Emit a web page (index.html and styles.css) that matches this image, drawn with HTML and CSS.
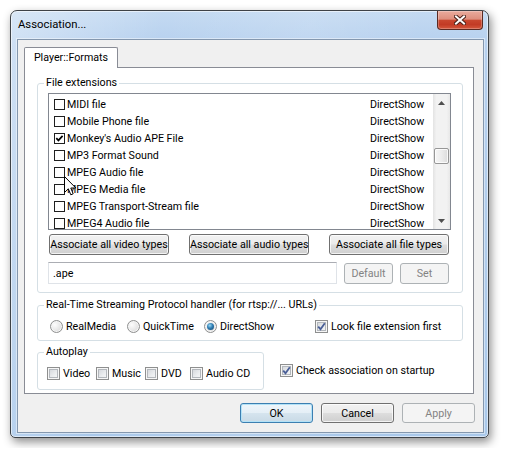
FILE: index.html
```html
<!DOCTYPE html>
<html lang="en">
<head>
<meta charset="utf-8">
<title>Association...</title>
<link rel="stylesheet" href="styles.css">
</head>
<body>
<div class="desktop">
  <div class="window">
    <div class="titlebar">
      <span class="title">Association...</span>
      <button class="close" aria-label="Close">
        <svg width="12" height="10" viewBox="0 0 12 10">
          <path d="M2 1.5 L10 8.5 M10 1.5 L2 8.5" stroke="#4a2119" stroke-width="4" stroke-linecap="square" fill="none"/>
          <path d="M2 1.5 L10 8.5 M10 1.5 L2 8.5" stroke="#ffffff" stroke-width="2" stroke-linecap="square" fill="none"/>
        </svg>
      </button>
    </div>
    <div class="frame">
      <div class="client">
        <div class="tabstrip">
          <div class="tab">Player::Formats</div>
        </div>
        <div class="page">
          <fieldset class="group g-ext">
            <legend>File extensions</legend>
            <div class="listbox">
              <div class="rows">
                <div class="row"><span class="lcb"></span><span class="name">MIDI file</span><span class="handler">DirectShow</span></div>
                <div class="row"><span class="lcb"></span><span class="name">Mobile Phone file</span><span class="handler">DirectShow</span></div>
                <div class="row"><span class="lcb"><svg width="9" height="9" viewBox="0 0 9 9"><path d="M1.3 4.2 L3.4 6.4 L7.6 1.9" stroke="#000" stroke-width="1.7" fill="none"/></svg></span><span class="name">Monkey's Audio APE File</span><span class="handler">DirectShow</span></div>
                <div class="row"><span class="lcb"></span><span class="name">MP3 Format Sound</span><span class="handler">DirectShow</span></div>
                <div class="row"><span class="lcb"></span><span class="name">MPEG Audio file</span><span class="handler">DirectShow</span></div>
                <div class="row"><span class="lcb"></span><span class="name">MPEG Media file</span><span class="handler">DirectShow</span></div>
                <div class="row"><span class="lcb"></span><span class="name">MPEG Transport-Stream file</span><span class="handler">DirectShow</span></div>
                <div class="row"><span class="lcb"></span><span class="name">MPEG4 Audio file</span><span class="handler">DirectShow</span></div>
              </div>
              <div class="vscroll">
                <div class="sb-btn"><svg width="7" height="4" viewBox="0 0 7 4"><path d="M0 4 L3.5 0 L7 4 Z" fill="#4f4f4f"/></svg></div>
                <div class="sb-track"><div class="sb-thumb" style="margin-top:37px"></div></div>
                <div class="sb-btn"><svg width="7" height="4" viewBox="0 0 7 4"><path d="M0 0 L3.5 4 L7 0 Z" fill="#4f4f4f"/></svg></div>
              </div>
            </div>
            <div class="assoc-row">
              <button class="btn wide">Associate all video types</button>
              <button class="btn wide">Associate all audio types</button>
              <button class="btn wide">Associate all file types</button>
            </div>
            <div class="edit-row">
              <input class="edit" type="text" value=".ape">
              <button class="btn small" disabled>Default</button>
              <button class="btn small" disabled>Set</button>
            </div>
          </fieldset>

          <fieldset class="group g-rtsp">
            <legend>Real-Time Streaming Protocol handler (for rtsp://... URLs)</legend>
            <div class="opts">
              <label class="opt opt-rm"><span class="radio"></span>RealMedia</label>
              <label class="opt opt-qt"><span class="radio"></span>QuickTime</label>
              <label class="opt opt-ds"><span class="radio on"></span>DirectShow</label>
              <label class="opt"><span class="cb"><svg width="9" height="9" viewBox="0 0 9 9"><path d="M1.2 4.6 L3.5 7.2 L7.8 1.2" stroke="#4a5f97" stroke-width="1.8" fill="none"/></svg></span>Look file extension first</label>
            </div>
          </fieldset>

          <div class="bottom-row">
            <fieldset class="group g-auto">
              <legend>Autoplay</legend>
              <div class="opts auto-opts">
                <label class="opt opt-video"><span class="cb"></span>Video</label>
                <label class="opt opt-music"><span class="cb"></span>Music</label>
                <label class="opt opt-dvd"><span class="cb"></span>DVD</label>
                <label class="opt"><span class="cb"></span>Audio CD</label>
              </div>
            </fieldset>
            <label class="opt startup"><span class="cb"><svg width="9" height="9" viewBox="0 0 9 9"><path d="M1.2 4.6 L3.5 7.2 L7.8 1.2" stroke="#4a5f97" stroke-width="1.8" fill="none"/></svg></span>Check association on startup</label>
          </div>
        </div>
        <div class="dlg-btns">
          <button class="btn dlg default">OK</button>
          <button class="btn dlg">Cancel</button>
          <button class="btn dlg" disabled>Apply</button>
        </div>
      </div>
    </div>
  </div>
</div>
<svg class="cursor" width="13" height="21" viewBox="0 0 13 21">
  <path d="M0.5 0.5 L0.5 16.5 L4.3 12.8 L6.8 18.8 L9.2 17.8 L6.8 12 L11.8 12 Z" fill="#fff" stroke="#000" stroke-width="1" stroke-linejoin="miter"/>
</svg>
</body>
</html>
```
FILE: styles.css
```css
* { box-sizing: border-box; }

body {
  margin: 0;
  background: #ffffff;
  font-family: Roboto, "Liberation Sans", Arial, sans-serif;
  font-size: 10.7px;
  color: #000;
}

.desktop {
  padding: 10px;
}

.window {
  width: 479px;
  height: 428px;
  border: 1px solid #3e4247;
  border-radius: 7px 7px 5px 5px;
  background:
    linear-gradient(100deg, rgba(255,255,255,0.35) 0%, rgba(255,255,255,0) 28%, rgba(255,255,255,0.12) 55%, rgba(255,255,255,0) 75%),
    linear-gradient(180deg, #c4daf2 0%, #b6d0ee 8%, #a9c8ea 100%);
  box-shadow: inset 0 0 0 1px rgba(255,255,255,0.55), 2px 4px 10px rgba(0,0,0,0.45);
  display: flex;
  flex-direction: column;
}

.titlebar {
  height: 28px;
  display: flex;
  align-items: flex-start;
  padding-left: 7px;
}

.title {
  flex: 1;
  line-height: 27px;
  font-size: 11.3px;
  color: #000;
}

.close {
  width: 46px;
  height: 19px;
  margin-right: 5px;
  padding: 0;
  border: 1px solid #5b2a22;
  border-top: 0;
  border-radius: 0 0 4px 4px;
  background: linear-gradient(180deg, #e9ab9d 0%, #de8e7d 45%, #c9472f 52%, #c23b25 75%, #d4583d 100%);
  box-shadow: inset 0 0 0 1px rgba(255,255,255,0.25);
  display: flex;
  align-items: center;
  justify-content: center;
}

.frame {
  flex: 1;
  display: flex;
  padding: 0 4px 4px 6px;
}

.client {
  flex: 1;
  border: 1px solid #8497ae;
  background: #f0f0f0;
  padding: 7px 8px 0 6px;
  display: flex;
  flex-direction: column;
  box-shadow: 0 0 0 1px rgba(255,255,255,0.45);
}

.tabstrip {
  display: flex;
}

.tab {
  width: 94px;
  height: 21px;
  border: 1px solid #898c95;
  border-bottom: 0;
  border-radius: 2px 2px 0 0;
  background: #fff;
  margin-bottom: -1px;
  position: relative;
  z-index: 1;
  text-align: center;
  line-height: 19px;
}

.page {
  height: 327px;
  border: 1px solid #898c95;
  background: #fff;
  margin-right: 1px;
  padding: 7px 10px 0 12px;
}

fieldset.group {
  margin: 0;
  min-width: 0;
  border: 1px solid #d5dfe5;
  border-radius: 3px;
  padding: 2px 11px 8px 10px;
}

fieldset.group legend {
  padding: 0 2px;
  margin-left: -4px;
  line-height: 16px;
  height: 16px;
  font-size: 10.7px;
  color: #000;
}

.listbox {
  height: 137px;
  border: 1px solid #828790;
  background: #fff;
  display: flex;
}

.rows {
  flex: 1;
  padding-top: 2px;
  overflow: hidden;
}

.row {
  height: 17px;
  display: flex;
  align-items: center;
  padding-left: 5px;
  white-space: nowrap;
}

.lcb {
  width: 11px;
  height: 11px;
  border: 1px solid #1f1f1f;
  background: #fff;
  margin-right: 2px;
  flex: none;
  display: flex;
}

.name {
  width: 303px;
  flex: none;
}

.vscroll {
  width: 17px;
  flex: none;
  display: flex;
  flex-direction: column;
  background: linear-gradient(90deg, #e3e3e3 0%, #f2f2f2 20%, #f2f2f2 80%, #e8e8e8 100%);
}

.sb-btn {
  height: 17px;
  flex: none;
  display: flex;
  align-items: center;
  justify-content: center;
}

.sb-track {
  flex: 1;
  padding: 0 1px;
}

.sb-thumb {
  height: 16px;
  border: 1px solid #979797;
  border-radius: 2px;
  background: linear-gradient(90deg, #f6f6f6 0%, #ececec 50%, #dcdcdc 100%);
  box-shadow: inset 0 0 0 1px rgba(255,255,255,0.8);
}

.btn {
  font-family: Roboto, "Liberation Sans", Arial, sans-serif;
  font-size: 10.7px;
  color: #000;
  height: 21px;
  padding: 0;
  border: 1px solid #707070;
  border-radius: 3px;
  background: linear-gradient(180deg, #f2f2f2 0%, #ebebeb 48%, #dddddd 52%, #cfcfcf 100%);
  box-shadow: inset 0 0 0 1px rgba(255,255,255,0.75);
  white-space: nowrap;
  text-align: center;
}

.btn:disabled {
  border-color: #adb2b5;
  background: #f4f4f4;
  color: #838383;
  box-shadow: none;
}

.assoc-row {
  display: flex;
  justify-content: space-between;
  margin: 4px 2px 0 1px;
}

.btn.wide {
  width: 120px;
}

.edit-row {
  display: flex;
  align-items: flex-start;
  margin-top: 7px;
}

.edit {
  width: 289px;
  height: 22px;
  border: 1px solid #dfe3e8;
  border-top-color: #abadb3;
  background: #fff;
  font-family: Roboto, "Liberation Sans", Arial, sans-serif;
  font-size: 10.7px;
  padding: 0 4px;
  color: #000;
}

.btn.small {
  width: 49px;
  margin-left: 7px;
  margin-top: 1px;
}

fieldset.g-rtsp {
  margin-top: 4px;
  padding: 5px 11px 6px 10px;
}

.opts {
  display: flex;
  align-items: center;
  height: 16px;
  padding-left: 2px;
  white-space: nowrap;
}

.opt {
  display: flex;
  align-items: center;
  gap: 3px;
  flex: none;
}

.opt-rm { width: 77px; }
.opt-qt { width: 77px; }
.opt-ds { width: 111px; }

.radio {
  width: 13px;
  height: 13px;
  border-radius: 50%;
  border: 1px solid #8e8f8f;
  background: radial-gradient(circle at 35% 35%, #fdfdfd 0%, #e6e6e6 55%, #c9c9c9 100%);
  box-shadow: inset 0 0 0 1px #f6f6f6;
  display: flex;
  align-items: center;
  justify-content: center;
  flex: none;
}

.radio.on::after {
  content: "";
  width: 7px;
  height: 7px;
  border-radius: 50%;
  background: radial-gradient(circle at 40% 35%, #9ad8f3 0%, #2f7db3 45%, #123f66 100%);
}

.cb {
  width: 13px;
  height: 13px;
  border: 1px solid #8e8f8f;
  background: linear-gradient(135deg, #cdd0d5 0%, #eceef0 60%, #f8f8f8 100%);
  box-shadow: inset 0 0 0 1px #f6f6f6, inset 0 0 0 2px #b3b7bc;
  display: flex;
  align-items: center;
  justify-content: center;
  flex: none;
}

.bottom-row {
  display: flex;
  align-items: flex-start;
  margin-top: 3px;
}

fieldset.g-auto {
  width: 227px;
  padding: 5px 10px 8px 10px;
}

.auto-opts {
  padding-left: 0;
  margin-left: -1px;
}

.opt-video { width: 49px; }
.opt-music { width: 49px; }
.opt-dvd { width: 45px; }

.startup {
  margin-left: 16px;
  margin-top: 18px;
  height: 16px;
}

.dlg-btns {
  display: flex;
  justify-content: flex-end;
  gap: 8px;
  margin-top: 9px;
}

.btn.dlg {
  width: 73px;
  height: 20px;
}

.btn.default {
  border-color: #3c7fb1;
  box-shadow: inset 0 0 0 1px #b3e2f7;
  background: linear-gradient(180deg, #eef6fb 0%, #e5eff6 48%, #d5e4ee 52%, #c9dae6 100%);
}

.cursor {
  position: absolute;
  left: 64px;
  top: 176px;
}
```
